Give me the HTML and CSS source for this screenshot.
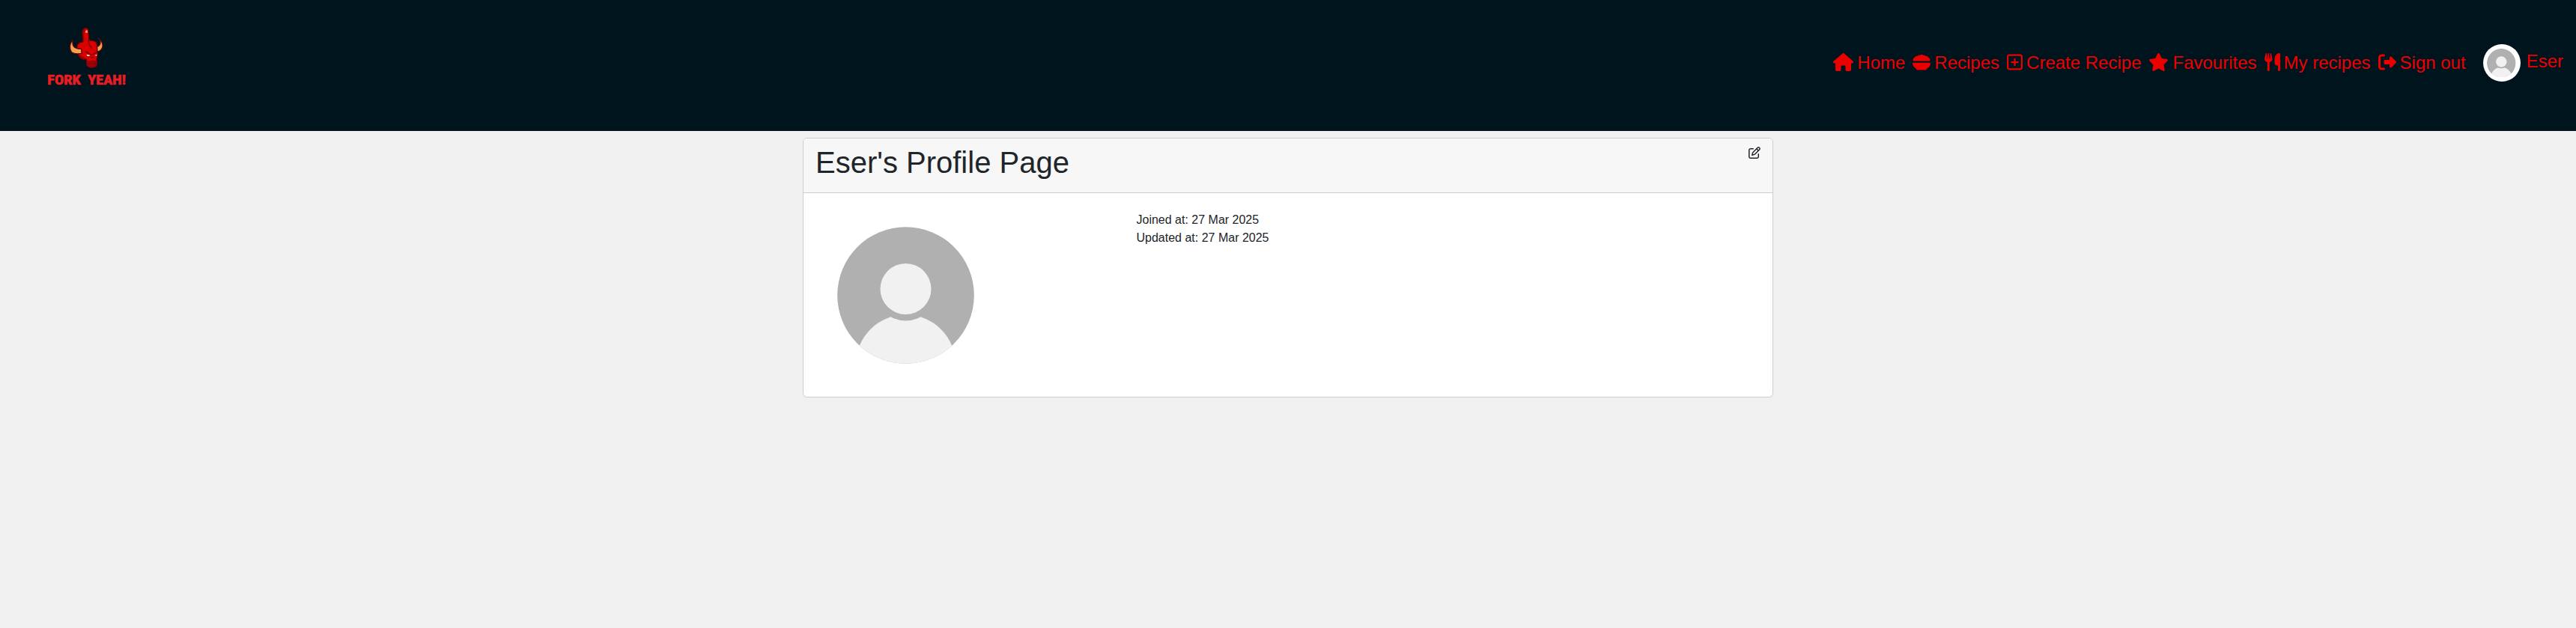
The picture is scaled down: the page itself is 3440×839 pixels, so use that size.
FILE: index.html
```html
<!DOCTYPE html>
<html lang="en">
<head>
<meta charset="utf-8">
<title>Eser's Profile Page</title>
<link rel="stylesheet" href="styles.css">
</head>
<body>
<svg class="defs" width="0" height="0">
  <defs>
    <clipPath id="disc"><circle r="91.3"/></clipPath>
    <symbol id="person" viewBox="-91.5 -91.5 183 183" overflow="visible">
      <g clip-path="url(#disc)">
        <circle r="92" fill="#b0b0b0"/>
        <circle cy="92.5" r="66.6" fill="#f1f1f1"/>
        <circle cy="-8.5" r="42.4" fill="#b0b0b0"/>
        <circle cy="-8.5" r="34" fill="#f1f1f1"/>
      </g>
    </symbol>
  </defs>
</svg>
<header class="navbar">
  <a class="brand" href="#">
    <svg width="240" height="175" viewBox="0 0 720 525">
      <g stroke="#5a0509" stroke-width="4" stroke-linejoin="round">
        <path fill="#d90000" d="M331 168C333 156 329 140 330 126C332 114 340 110 348 113C356 117 355 128 355 138L357 160C366 166 376 160 384 168C392 178 389 194 391 206C394 222 388 230 387 240C391 252 390 264 380 269C370 272 356 271 349 264C344 256 348 246 346 238C330 242 316 232 312 214L308 186C312 174 320 168 331 168Z"/>
        <path fill="#f3a254" d="M292 160C278 174 277 198 288 210C300 218 314 216 327 214L326 196C312 196 296 194 292 180C290 172 290 166 292 160Z"/>
        <path fill="#f3a254" d="M392 152C404 158 413 172 411 186C409 198 400 205 390 207L389 187C396 186 403 178 402 168C401 162 397 156 392 152Z"/>
      </g>
      <path fill="#9a0006" d="M331 130C333 118 338 114 342 114C336 126 337 150 337 168L332 168C334 150 331 140 331 130ZM347 245C360 242 376 242 388 244C391 258 386 267 378 268C360 270 348 264 347 245ZM314 219C326 222 336 230 346 236C330 239 318 231 314 219Z"/>
      <path fill="#ffad6b" d="M342 131C342 124 345 121 350 121L351 131Z"/>
      <path fill="none" stroke="#77040a" stroke-width="4" d="M356 160C350 176 362 184 368 194M344 206L358 217L369 220L388 209M364 232L370 229L376 232"/>
      <path fill="#fff" d="M347 218L361 221L357 225L349 224ZM380 222L388 218L387 224Z"/>
      <path fill="#5e0007" d="M356 253l7 2l-4 4zM378 255l7-2l-3 6z"/>
      <text class="brand-name" y="340"><tspan x="190" textLength="133" lengthAdjust="spacingAndGlyphs">FORK</tspan> <tspan x="352" textLength="152" lengthAdjust="spacingAndGlyphs">YEAH!</tspan></text>
    </svg>
  </a>
  <nav class="links">
    <a href="#"><svg width="27" height="24" viewBox="0 0 576 512"><path d="M575.8 255.5c0 18-15 32.1-32 32.1h-32l.7 160.2c0 2.7-.2 5.4-.5 8.1V472c0 22.1-17.9 40-40 40H456c-1.1 0-2.2 0-3.3-.1c-1.4 .1-2.8 .1-4.2 .1H416 392c-22.1 0-40-17.9-40-40V448 384c0-17.7-14.3-32-32-32H256c-17.7 0-32 14.3-32 32v64 24c0 22.1-17.9 40-40 40H160 128.1c-1.5 0-3-.1-4.5-.2c-1.2 .1-2.4 .2-3.6 .2H104c-22.1 0-40-17.9-40-40V360c0-.9 0-1.9 .1-2.8V287.6H32c-18 0-32-14-32-32.1c0-9 3-17 10-24L266.4 8c7-7 15-8 22-8s15 2 21 7L564.8 231.5c8 7 12 15 11 24z"/></svg>Home</a>
    <a href="#"><svg width="24" height="24" viewBox="0 0 512 512"><path d="M18 224C12 215 12 206 15 197C8 160 32 132 64 125C72 92 106 75 137 84C150 61 174 55 198 64C210 32 302 32 314 64C338 55 362 61 375 84C406 75 440 92 448 125C480 132 504 160 497 197C500 206 500 215 494 224ZM28 272H484C502 272 512 284 511 298C506 362 468 408 414 438C408 452 398 480 374 480H138C114 480 104 452 98 438C44 408 6 362 1 298C0 284 10 272 28 272Z"/></svg>Recipes</a>
    <a href="#"><svg width="21" height="24" viewBox="0 0 448 512"><path fill-rule="evenodd" d="M64 80C55.200 80 48 87.200 48 96V416C48 424.800 55.200 432 64 432H384C392.800 432 400 424.800 400 416V96C400 87.200 392.800 80 384 80ZM0 96C0 60.700 28.700 32 64 32H384C419.300 32 448 60.700 448 96V416C448 451.300 419.300 480 384 480H64C28.700 480 0 451.300 0 416Z"/><path d="M200 344V280H136c-13.300 0-24-10.700-24-24s10.700-24 24-24h64V168c0-13.300 10.700-24 24-24s24 10.700 24 24v64h64c13.300 0 24 10.700 24 24s-10.700 24-24 24H248v64c0 13.300-10.700 24-24 24s-24-10.700-24-24z"/></svg>Create Recipe</a>
    <a href="#"><svg width="27" height="24" viewBox="0 0 576 512"><path d="M316.900 18C311.600 7 300.400 0 288.100 0s-23.400 7-28.800 18L195 150.300 51.400 171.500c-12 1.800-22 10.200-25.700 21.700s-.7 24.200 7.900 32.700L137.800 329 113.200 474.700c-2 12 3 24.200 12.900 31.300s23 8 33.800 2.300l128.300-68.500 128.300 68.500c10.800 5.700 23.900 4.900 33.800-2.300s14.900-19.300 12.900-31.300L438.500 329 542.700 225.900c8.600-8.500 11.700-21.200 7.900-32.700s-13.700-19.900-25.700-21.700L381.200 150.300 316.900 18z"/></svg>Favourites</a>
    <a href="#"><svg width="21" height="24" viewBox="0 0 448 512"><path d="M416 0C400 0 288 32 288 176V288c0 35.300 28.700 64 64 64h32V480c0 17.700 14.300 32 32 32s32-14.300 32-32V352 240 32c0-17.700-14.300-32-32-32zM64 16C64 7.800 57.900 1 49.700 .1S34.200 4.600 32.400 12.500L2.100 148.800C.7 155.100 0 161.500 0 167.900c0 45.900 35.100 83.600 80 87.700V480c0 17.700 14.300 32 32 32s32-14.300 32-32V255.600c44.900-4.100 80-41.800 80-87.700c0-6.400-.7-12.800-2.100-19.100L191.600 12.500c-1.800-8-9.300-13.300-17.400-12.400S160 7.800 160 16V150.200c0 5.400-4.400 9.800-9.800 9.800c-5.100 0-9.300-3.900-9.800-9L127.900 14.600C127.200 6.300 120.300 0 112 0s-15.200 6.300-15.900 14.600L83.700 151c-.5 5.100-4.700 9-9.800 9c-5.400 0-9.800-4.400-9.800-9.800V16z"/></svg>My recipes</a>
    <a href="#"><svg width="24" height="24" viewBox="0 0 512 512"><path d="M377.900 105.900L500.700 228.700c7.200 7.200 11.300 17.100 11.300 27.300s-4.100 20.100-11.300 27.300L377.900 406.100c-6.400 6.400-15 9.900-24 9.900c-18.700 0-33.900-15.200-33.900-33.900l0-62.100-128 0c-17.700 0-32-14.300-32-32l0-64c0-17.700 14.300-32 32-32l128 0 0-62.100c0-18.700 15.200-33.900 33.900-33.900c9 0 17.600 3.600 24 9.900zM160 96L96 96c-17.700 0-32 14.300-32 32l0 256c0 17.700 14.300 32 32 32l64 0c17.700 0 32 14.300 32 32s-14.300 32-32 32l-64 0c-53 0-96-43-96-96L0 128C0 75 43 32 96 32l64 0c17.700 0 32 14.300 32 32s-14.300 32-32 32z"/></svg>Sign out</a>
  </nav>
  <a class="user" href="#">
    <span class="thumb"><svg width="38.600" height="38.600"><use href="#person"/></svg></span>
    <span class="user-name">Eser</span>
  </a>
</header>
<main class="card">
  <div class="card-header">
    <h1>Eser's Profile Page</h1>
    <a class="edit" href="#"><svg width="16" height="16" viewBox="0 0 512 512"><path d="M441 58.900L453.100 71c9.400 9.400 9.400 24.600 0 33.900L424 134.100 377.900 88 407 58.900c9.400-9.400 24.600-9.400 33.900 0zM209.800 256.200L344 121.900 390.100 168 255.800 302.200c-2.900 2.900-6.500 5-10.400 6.100l-58.500 16.700 16.700-58.500c1.100-3.900 3.200-7.500 6.100-10.400zM373.100 25L175.800 222.200c-8.700 8.700-15 19.400-18.300 31.100l-28.600 100c-2.400 8.400-.1 17.400 6.100 23.600s15.200 8.500 23.600 6.100l100-28.600c11.800-3.400 22.500-9.700 31.100-18.300L487 138.900c28.100-28.100 28.100-73.700 0-101.800L474.900 25C446.800-3.100 401.200-3.100 373.100 25zM88 64C39.400 64 0 103.400 0 152V424c0 48.600 39.400 88 88 88H360c48.600 0 88-39.400 88-88V312c0-13.300-10.700-24-24-24s-24 10.700-24 24V424c0 22.100-17.900 40-40 40H88c-22.100 0-40-17.900-40-40V152c0-22.100 17.900-40 40-40H200c13.300 0 24-10.700 24-24s-10.700-24-24-24H88z"/></svg></a>
  </div>
  <div class="card-body">
    <div class="photo"><svg width="183" height="183"><use href="#person"/></svg></div>
    <div class="info">
      <div>Joined at: 27 Mar 2025</div>
      <div>Updated at: 27 Mar 2025</div>
    </div>
  </div>
</main>
</body>
</html>
```
FILE: styles.css
```css
* { box-sizing: border-box; }
body {
  margin: 0;
  background: #f0f0f0;
  color: #212529;
  font: 16px/24px "Liberation Sans", Arial, sans-serif;
}
a { color: inherit; text-decoration: none; }
svg { display: block; fill: currentColor; flex: none; }
.defs { height: 0; }
.navbar {
  display: flex;
  align-items: flex-start;
  height: 175px;
  padding-right: 17px;
  background: #00141e;
  color: #eb0000;
  font-size: 24px;
  line-height: 36px;
}
.brand { margin-right: auto; }
.brand-name {
  fill: #e81e22;
  stroke: #e81e22;
  stroke-width: 2;
  font: bold 56px "Liberation Sans Narrow", "Roboto Condensed", "DejaVu Sans Condensed", "Liberation Sans", sans-serif;
}
.links { display: flex; gap: 10px; margin-top: 66px; }
.links a { display: flex; gap: 5px; white-space: nowrap; }
.links svg { margin-top: 5px; }
.user { display: flex; margin: 59px 0 0 23px; }
.thumb {
  display: grid;
  place-items: center;
  width: 50px;
  height: 50px;
  border-radius: 50%;
  background: #fff;
}
.user-name { margin: 5px 0 0 8px; }
.card {
  width: 1296px;
  height: 347px;
  margin: 9px auto 0;
  border: 1px solid #cecece;
  border-radius: 6px;
  background: #fff;
  overflow: hidden;
}
.card-header {
  display: flex;
  justify-content: space-between;
  height: 73px;
  padding: 8px 16px;
  background: #f7f7f7;
  border-bottom: 1px solid #cbcbcb;
}
h1 { margin: 0; font-size: 40px; font-weight: 400; line-height: 48px; }
.edit { margin-top: 3px; }
.card-body { display: flex; padding: 24px 16px 0; }
.photo { width: 428.500px; padding: 20.500px 0 0 28.500px; }
```
